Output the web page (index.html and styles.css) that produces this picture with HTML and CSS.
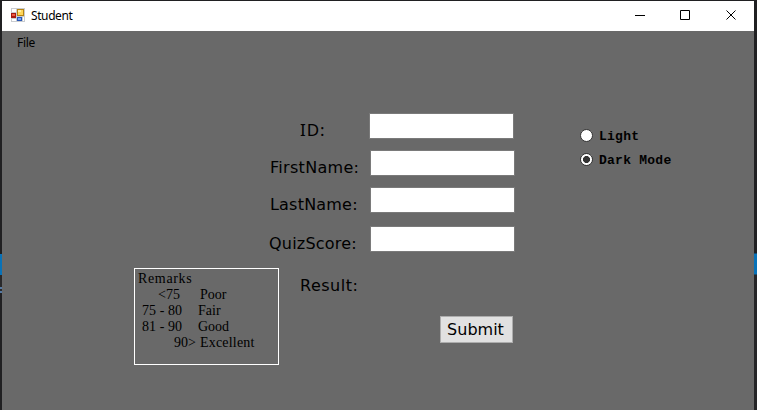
FILE: index.html
```html
<!DOCTYPE html>
<html lang="en">
<head>
<meta charset="utf-8">
<title>Student</title>
<link rel="stylesheet" href="styles.css">
</head>
<body>
<div class="edge edge-left"></div>
<div class="window">
  <header class="titlebar">
    <svg class="app-icon" width="14" height="14" viewBox="0 0 14 14">
      <path fill="#c9ccd0" d="M0 0h14v14H0z"/>
      <path fill="#fff" d="M1 1h4v3H1zM1 11h4v2H1zM12 9h1v4h-1z"/>
      <path fill="#a51b12" d="M0 5h5v5H0z"/><path fill="#ee5b43" d="M1 6h3v2H1z"/>
      <path fill="#b78412" d="M6 1h7v7H6z"/><path fill="#ffd65a" d="M7 2h5v5H7z"/><path fill="#fff0a5" d="M7 2h3v2H7z"/>
      <path fill="#2857b7" d="M6 9h5v4H6z"/><path fill="#75a4f4" d="M7 10h3v2H7z"/>
    </svg>
    <span class="title">Student</span>
    <svg class="controls" width="102" height="10" viewBox="0 0 102 10" fill="none" stroke="#000">
      <path d="M0 5.5h10M45.500.500h9v9h-9zM91.500.500l9 9M100.500.500l-9 9"/>
    </svg>
  </header>
  <nav class="menu"><span class="menu-item">File</span></nav>
  <main class="content">
    <section class="remarks">
      <div class="remarks-title">Remarks</div>
      <div class="remark"><span class="range low">&lt;75</span><span class="grade poor">Poor</span></div>
      <div class="remark"><span class="range">75 - 80</span><span class="grade">Fair</span></div>
      <div class="remark"><span class="range">81 - 90</span><span class="grade">Good</span></div>
      <div class="remark"><span class="range high">90&gt;</span><span class="grade top">Excellent</span></div>
    </section>
    <form class="form">
      <div class="row id"><label for="sid">ID:</label><input id="sid"></div>
      <div class="row first"><label for="first">FirstName:</label><input id="first"></div>
      <div class="row last"><label for="last">LastName:</label><input id="last"></div>
      <div class="row quiz"><label for="quiz">QuizScore:</label><input id="quiz"></div>
      <div class="result">Result:</div>
      <button class="submit" type="button">Submit</button>
    </form>
    <section class="modes">
      <div class="mode"><span class="radio"></span><span class="mode-name">Light</span></div>
      <div class="mode"><span class="radio checked"></span><span class="mode-name dark">Dark Mode</span></div>
    </section>
  </main>
</div>
<div class="edge edge-right"></div>
</body>
</html>
```
FILE: styles.css
```css
* { box-sizing: border-box; }
body { margin: 0; width: 757px; height: 410px; overflow: hidden; display: flex; background: #202022; color: #000; }
.edge { height: 410px; background: linear-gradient(#202022 253px, #0872b8 254px, #0872b8 274px, #252527 275px); }
.edge-left { width: 2px; background: linear-gradient(#202022 254px, #0872b8 254px, #0872b8 275px, #29292b 275px, #29292b 287px, #5479a3 287px, #5479a3 289px, #29292b 289px, #29292b 291px, #5479a3 291px, #5479a3 293px, #202022 293px); }
.edge-right { width: 3px; }
.window { width: 752px; height: 409px; margin-top: 1px; background: #696969; }
.titlebar { height: 30px; background: #fff; display: flex; padding: 7px 17px 0 9px; }
.title { margin: 0 0 0 6px; font: 12px/15px "Noto Sans", sans-serif; letter-spacing: -.4px; }
.controls { margin: 2px 0 0 auto; }
.menu { height: 24px; padding: 4px 15px; font: 12px/16px "Noto Sans", sans-serif; letter-spacing: -.3px; }
.content { display: flex; padding-left: 132px; }
.remarks { width: 145px; height: 97px; margin-top: 213px; border: 1px solid #fff; padding: 2px 0 0 3px; font: 14px/16px "Liberation Serif", serif; flex: none; }
.remark { display: flex; white-space: pre; }
.remarks-title { letter-spacing: .65px; }
.range { width: 60px; padding-left: 4px; letter-spacing: .05px; flex: none; }
.low { padding-left: 20px; width: 62px; }
.high { padding-left: 36px; width: 62px; }
.top { letter-spacing: .2px; }
.form { width: 246px; flex: none; margin-left: -10px; padding-top: 58px; font: 16px/20px "DejaVu Sans", sans-serif; letter-spacing: .2px; }
.row { display: flex; height: 26px; margin-bottom: 11px; }
.row label { flex: none; width: 101px; padding: 8px 0 0 1px; white-space: nowrap; }
.row input { width: 145px; height: 26px; padding: 0; border: 1px solid #7a7a7a; background: #fff; flex: none; }
.row.id label { width: 100px; padding: 7px 0 0 31px; font-family: "Noto Sans", sans-serif; font-size: 17px; letter-spacing: .9px; }
.row.first label { letter-spacing: .3px; }
.row.quiz label { padding-left: 0; }
.last { margin-bottom: 13px; }
.result { margin: 24px 0 0 31px; letter-spacing: .5px; }
.submit { display: block; width: 73px; height: 27px; margin: 20px 0 0 171px; padding: 0 2px 0 0; border: 1px solid #adadad; background: #e1e1e1; font: 16px/20px "DejaVu Sans", sans-serif; color: #000; }
.modes { margin-left: 65px; padding-top: 74px; font: bold 13px/15px "Liberation Mono", monospace; letter-spacing: .25px; }
.mode { display: flex; height: 24px; }
.radio { width: 13px; height: 13px; border: 1px solid #333; border-radius: 50%; background: #fff; margin-right: 6px; flex: none; }
.checked { background: radial-gradient(circle, #333 3.2px, #fff 3.8px); }
```
